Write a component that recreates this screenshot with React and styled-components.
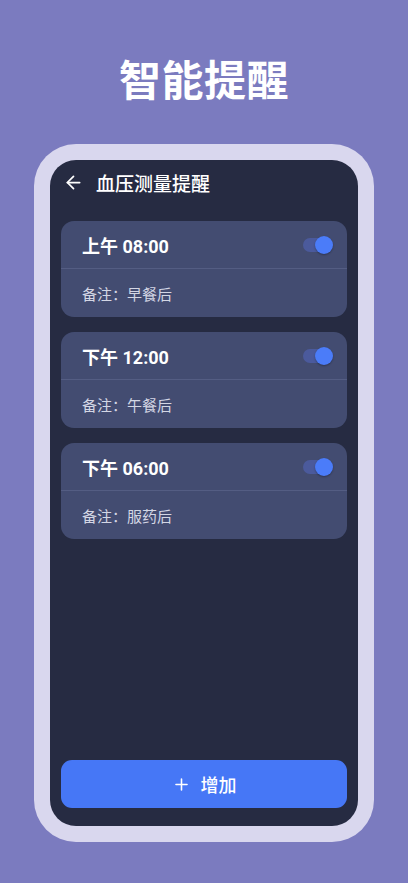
import React from 'react';
import styled, { createGlobalStyle } from 'styled-components';
import { ArrowLeft, Plus } from 'lucide-react';

const GlobalStyle = createGlobalStyle`
  html, body {
    margin: 0;
    padding: 0;
    background: #7b7bbf;
  }
  body {
    font-family: Roboto, "Noto Sans CJK SC", sans-serif;
  }
`;

const reminders = [
  { time: '上午 08:00', note: '早餐后' },
  { time: '下午 12:00', note: '午餐后' },
  { time: '下午 06:00', note: '服药后' },
];

function App() {
  return (
    <Page>
      <GlobalStyle />
      <Headline>智能提醒</Headline>
      <PhoneFrame>
        <Screen>
          <TopBar>
            <ArrowLeft size={21} strokeWidth={2} color="#ffffff" />
            <TopTitle>血压测量提醒</TopTitle>
          </TopBar>
          <List>
            {reminders.map((r) => (
              <Card key={r.time}>
                <CardTop>
                  <Time>{r.time}</Time>
                  <Toggle>
                    <Thumb />
                  </Toggle>
                </CardTop>
                <CardBottom>备注：{r.note}</CardBottom>
              </Card>
            ))}
          </List>
          <AddButton>
            <Plus size={19} strokeWidth={2} />
            <span>增加</span>
          </AddButton>
        </Screen>
      </PhoneFrame>
    </Page>
  );
}

export default App;

const Page = styled.div`
  width: 408px;
  height: 883px;
  background: #7b7bbf;
  overflow: hidden;
  display: flex;
  flex-direction: column;
  align-items: center;
`;

const Headline = styled.h1`
  margin: 52px 0 0;
  height: 60px;
  line-height: 60px;
  font-size: 42px;
  font-weight: 700;
  color: #ffffff;
  letter-spacing: 0.5px;
`;

const PhoneFrame = styled.div`
  margin-top: 32px;
  width: 308px;
  padding: 16px;
  background: #d9d7ee;
  border-radius: 42px;
`;

const Screen = styled.div`
  height: 666px;
  background: #262b42;
  border-radius: 26px;
  display: flex;
  flex-direction: column;
  padding: 0 11px 18px;
  box-sizing: border-box;
`;

const TopBar = styled.div`
  height: 44px;
  display: flex;
  align-items: center;
  gap: 12px;
  padding-left: 2px;
`;

const TopTitle = styled.span`
  font-size: 19px;
  font-weight: 500;
  color: #ffffff;
`;

const List = styled.div`
  margin-top: 17px;
  display: flex;
  flex-direction: column;
  gap: 15px;
  flex: 1;
`;

const Card = styled.div`
  background: #434c71;
  border-radius: 13px;
  overflow: hidden;
`;

const CardTop = styled.div`
  height: 47px;
  display: flex;
  align-items: center;
  justify-content: space-between;
  padding: 0 16px 0 21px;
  border-bottom: 1px solid #545d83;
`;

const Time = styled.span`
  font-size: 18px;
  font-weight: 700;
  color: #ffffff;
`;

const Toggle = styled.div`
  position: relative;
  width: 28px;
  height: 14px;
  border-radius: 7px;
  background: #4b5a9c;
`;

const Thumb = styled.div`
  position: absolute;
  right: -2px;
  top: 50%;
  width: 18px;
  height: 18px;
  margin-top: -9px;
  border-radius: 50%;
  background: #4b7cf9;
  box-shadow: 0 1px 2px rgba(0, 0, 0, 0.3);
`;

const CardBottom = styled.div`
  height: 48px;
  display: flex;
  align-items: center;
  padding-left: 21px;
  font-size: 15px;
  color: #d3d6e4;
`;

const AddButton = styled.button`
  height: 48px;
  border: none;
  border-radius: 11px;
  background: #4677f6;
  color: #ffffff;
  font-family: Roboto, "Noto Sans CJK SC", sans-serif;
  font-size: 18px;
  font-weight: 500;
  display: flex;
  align-items: center;
  justify-content: center;
  gap: 10px;
  cursor: pointer;
`;
